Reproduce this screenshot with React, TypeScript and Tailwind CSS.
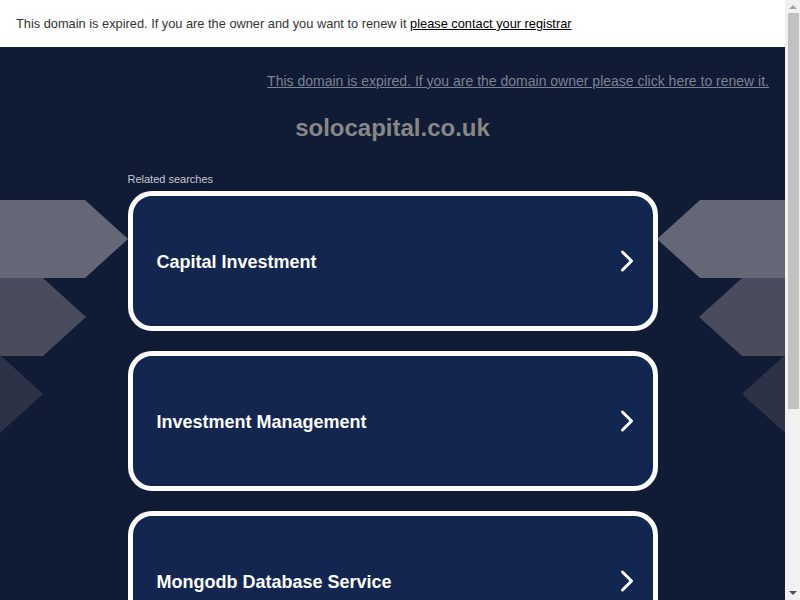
const searches = [
  "Capital Investment",
  "Investment Management",
  "Mongodb Database Service",
  "Business Loans",
  "Financial Planning",
];

function SideArrows({ side }: { side: "left" | "right" }) {
  // chevrons stepping outward, each one 43px further and darker
  const shapes = [
    { y: 153, tip: 128, color: "#646876" },
    { y: 231, tip: 86, color: "#484c5c" },
    { y: 308, tip: 43, color: "#2e3246" },
    { y: 385, tip: 0, color: "#262b40" },
  ];
  return (
    <svg
      className={`absolute top-0 ${side === "left" ? "left-0" : "right-0 -scale-x-100"}`}
      width="130"
      height="520"
      viewBox="0 0 130 520"
    >
      {shapes.map((s) => (
        <polygon
          key={s.y}
          fill={s.color}
          points={`-60,${s.y} ${s.tip - 43},${s.y} ${s.tip},${s.y + 39} ${s.tip - 43},${s.y + 78} -60,${s.y + 78}`}
        />
      ))}
    </svg>
  );
}

// the window's scrollbar, as it shows in the screenshot
function Scrollbar() {
  return (
    <div className="flex w-[15px] shrink-0 flex-col items-center bg-[#f1f1f1]">
      <div className="flex h-[13px] items-center justify-center">
        <div className="h-0 w-0 border-x-[4px] border-b-[4px] border-x-transparent border-b-[#a3a3a3]" />
      </div>
      <div className="ml-[1px] h-[396px] w-[11px] bg-[#c1c1c1]" />
      <div className="flex-1" />
      <div className="flex h-[15px] items-center justify-center">
        <div className="h-0 w-0 border-x-[4px] border-t-[4px] border-x-transparent border-t-[#505050]" />
      </div>
    </div>
  );
}

export default function App() {
  return (
    <div className="flex h-[600px] overflow-hidden font-['Liberation_Sans',Arial,sans-serif]">
      <div className="min-w-0 flex-1 bg-[#101b35]">
        <div className="flex h-[47px] items-center bg-white px-4 text-[12.8px] text-[#333]">
          <span>
            This domain is expired. If you are the owner and you want to renew it{" "}
            <a href="#" className="text-black underline">
              please contact your registrar
            </a>
          </span>
        </div>

        <div className="relative overflow-hidden pb-10">
          <SideArrows side="left" />
          <SideArrows side="right" />

          <div className="relative flex justify-end px-4 pt-[24px]">
            <a href="#" className="text-[14px] text-[#7d8292] underline">
              This domain is expired. If you are the domain owner please click here to renew it.
            </a>
          </div>

          <h1 className="relative mt-[18px] text-center text-[24px] font-bold text-[#878787]">
            solocapital.co.uk
          </h1>

          <div className="relative mx-auto mt-[25px] w-[530px]">
            <p className="mb-[3px] text-[11px] text-[#c7c9d1]">Related searches</p>
            <div className="flex flex-col gap-5">
              {searches.map((s) => (
                <a
                  key={s}
                  href="#"
                  className="flex h-[140px] items-center justify-between rounded-[24px] border-[5px] border-white bg-[#12264f] pl-6 pr-[18px] pt-1 text-white"
                >
                  <span className="text-[18px] font-bold">{s}</span>
                  <svg width="16" height="24" viewBox="0 0 16 24" fill="none" className="-mt-1">
                    <polyline
                      points="3.5,3 12.5,12 3.5,21"
                      stroke="white"
                      strokeWidth="3"
                      strokeLinecap="round"
                      strokeLinejoin="round"
                    />
                  </svg>
                </a>
              ))}
            </div>
          </div>
        </div>
      </div>
      <Scrollbar />
    </div>
  );
}
